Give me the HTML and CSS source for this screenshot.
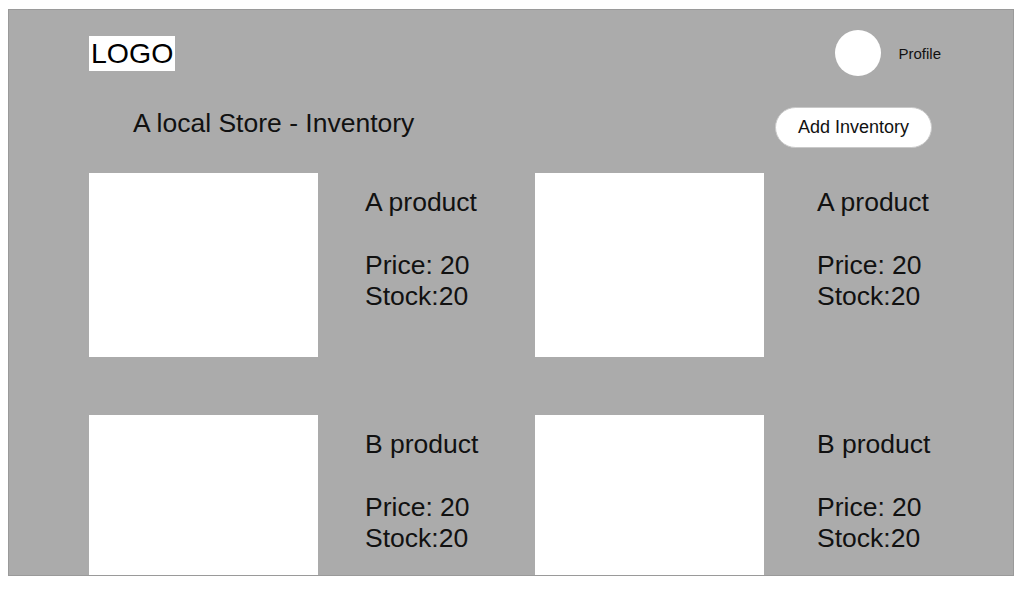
FILE: index.html
```html
<!DOCTYPE html>
<html lang="en">
<head>
  <meta charset="UTF-8" />
  <meta name="viewport" content="width=device-width, initial-scale=1" />
  <title>A local Store - Inventory</title>
  <link rel="stylesheet" href="styles.css">
</head>
<body>
<div class="frame">
  <header class="topbar">
    <div class="logo">LOGO</div>
    <div class="profile">
      <span class="avatar"></span>
      <span class="profile-name">Profile</span>
    </div>
  </header>

  <div class="toolbar">
    <h1>A local Store - Inventory</h1>
    <button class="add-btn" type="button">Add Inventory</button>
  </div>

  <main class="products">
    <div class="card">
      <div class="thumb"></div>
      <div class="info">
        <h2>A product</h2>
        <p>Price: 20</p>
        <p>Stock:20</p>
      </div>
    </div>
    <div class="card">
      <div class="thumb"></div>
      <div class="info">
        <h2>A product</h2>
        <p>Price: 20</p>
        <p>Stock:20</p>
      </div>
    </div>
    <div class="card">
      <div class="thumb"></div>
      <div class="info">
        <h2>B product</h2>
        <p>Price: 20</p>
        <p>Stock:20</p>
      </div>
    </div>
    <div class="card">
      <div class="thumb"></div>
      <div class="info">
        <h2>B product</h2>
        <p>Price: 20</p>
        <p>Stock:20</p>
      </div>
    </div>
  </main>
</div>
</body>
</html>
```

FILE: styles.css
```css
:root {
  --panel: #ababab;
  --panel-border: #9a9a9a;
  --card: #ffffff;
  --text: #111111;
}

body {
  margin: 0;
  font-family: 'Liberation Sans', Arial, Helvetica, sans-serif;
  color: var(--text);
  background: #ffffff;
}

.frame {
  box-sizing: border-box;
  height: 567px;
  margin: 9px 10px 0 8px;
  padding: 20px 72px 0 80px;
  background: var(--panel);
  border: 1px solid var(--panel-border);
  overflow: hidden;
}

/* top row: logo + profile */
.topbar {
  display: flex;
  justify-content: space-between;
  align-items: center;
  height: 46px;
}

.logo {
  background: var(--card);
  font-size: 28.5px;
  line-height: 35px;
  padding: 0 2px;
  color: #000;
}

.profile {
  display: flex;
  align-items: center;
  gap: 17px;
}

.avatar {
  width: 46px;
  height: 46px;
  border-radius: 50%;
  background: var(--card);
}

.profile-name {
  font-size: 15px;
}

/* title + action */
.toolbar {
  display: flex;
  justify-content: space-between;
  align-items: flex-start;
  margin-top: 31px;
  padding: 0 9px 0 44px;
}

.toolbar h1 {
  margin: 0;
  padding-top: 1px;
  font-size: 26.5px;
  font-weight: normal;
  line-height: 31px;
}

.add-btn {
  height: 41px;
  padding: 0 22px;
  background: var(--card);
  border: 1px solid #c9c9c9;
  border-radius: 21px;
  font-family: inherit;
  font-size: 18px;
  color: var(--text);
  cursor: pointer;
}

/* product grid */
.products {
  display: grid;
  grid-template-columns: 446px 1fr;
  row-gap: 58px;
  margin-top: 25px;
}

.card {
  display: flex;
}

.thumb {
  flex: none;
  width: 229px;
  height: 184px;
  background: var(--card);
}

.info {
  padding: 14px 0 0 47px;
  font-size: 26.5px;
  line-height: 31.3px;
}

.card:nth-child(even) .info {
  padding-left: 53px;
}

.info h2 {
  margin: 0 0 31.3px;
  font-size: inherit;
  font-weight: normal;
}

.info p {
  margin: 0;
}
```
